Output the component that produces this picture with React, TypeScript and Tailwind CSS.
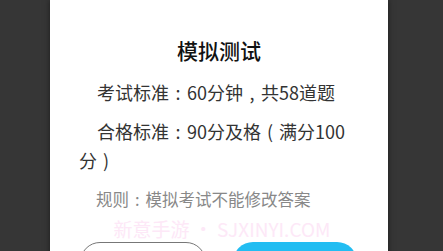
function Punct({ ch }: { ch: string }) {
  return <span className="inline-block w-[1em] indent-0 text-center">{ch}</span>
}

export default function App() {
  return (
    <div className="w-[443px] h-[251px] bg-[#363636] overflow-hidden flex font-['Noto_Sans_CJK_SC',sans-serif]">
      {/* Dialog card */}
      <div className="relative ml-[50px] w-[338px] h-[300px] bg-white shadow-[0_0_6px_rgba(0,0,0,0.5)] pl-[29px] pr-[24px] pt-[35px]">
        <h1 className="text-center pr-[5px] text-[21px] leading-[30px] font-medium text-[#111]">模拟测试</h1>

        <div className="mt-[13px] space-y-[10px] text-[18px] leading-[29px] text-[#333]">
          <p className="indent-[18px]">
            考试标准<Punct ch=":" />60分钟<Punct ch="," />共58道题
          </p>
          <p className="indent-[18px]">
            合格标准<Punct ch=":" />90分及格<Punct ch="(" />满分100
            <span className="whitespace-nowrap">分<Punct ch=")" /></span>
          </p>
          <p className="indent-[17px] text-[16.5px] text-[#888]">
            规则<Punct ch=":" />模拟考试不能修改答案
          </p>
        </div>

        {/* Watermark */}
        <div className="absolute left-0 right-0 top-[217px] pl-[6px] text-center text-[19px] leading-[24px] text-[#fde8f7] whitespace-nowrap pointer-events-none">
          新意手游 • SJXINYI.COM
        </div>

        <div className="mt-[28px] flex">
          <button className="ml-[1px] w-[126px] h-[40px] rounded-[20px] border border-[#777] bg-white text-[16px] text-[#333]">
            取消
          </button>
          <button className="ml-[27px] w-[124px] h-[40px] rounded-[20px] bg-[#22bdf2] text-[16px] text-white">
            开始考试
          </button>
        </div>
      </div>
    </div>
  )
}
